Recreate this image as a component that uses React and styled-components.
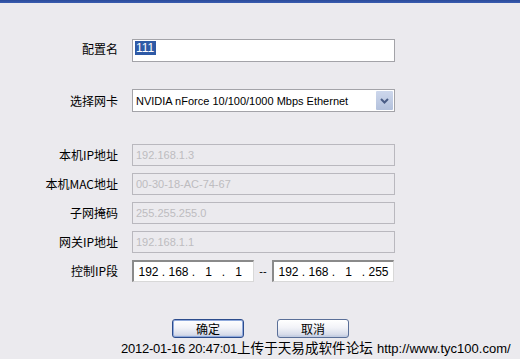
import React from "react";
import styled, { createGlobalStyle } from "styled-components";

const Global = createGlobalStyle`
  html, body { margin: 0; padding: 0; background: #ebeaee; }
  body { width: 520px; height: 359px; overflow: hidden; font-family: "Liberation Sans", "Noto Sans CJK SC", sans-serif; }
`;

const Page = styled.div`
  width: 520px;
  height: 359px;
  background: #ebeaee;
  display: flex;
  flex-direction: column;
`;

const TopBar = styled.div`
  height: 3px;
  background: linear-gradient(#2a4a9a, #3a5cb0);
  flex: none;
`;

const Form = styled.div`
  display: flex;
  flex-direction: column;
  padding-top: 36px;
`;

const Row = styled.div`
  display: grid;
  grid-template-columns: 118px 263px;
  column-gap: 14px;
  align-items: center;
  margin-top: ${(p) => p.$gap || 0}px;
  height: ${(p) => p.$h || 22}px;
`;

const Label = styled.div`
  text-align: right;
  font-family: "Noto Sans CJK SC", sans-serif;
  font-size: 12px;
  line-height: 14px;
  color: #000;
  margin-top: ${(p) => (p.$up ? -3 : 0)}px;
`;

const TextBox = styled.div`
  box-sizing: border-box;
  height: 100%;
  background: #fff;
  border: 1px solid #a3a3a8;
  display: flex;
  align-items: center;
  padding-left: 2px;
`;

const Selected = styled.span`
  background: #2f5aa6;
  color: #fff;
  font-family: "Liberation Sans", sans-serif;
  font-size: 12px;
  line-height: 14px;
  padding: 0 2px 0 1px;
  margin-top: -6px;
`;

const SelectBox = styled.div`
  box-sizing: border-box;
  height: 100%;
  background: #fff;
  border: 1px solid #a3a3a8;
  display: flex;
  align-items: stretch;
`;

const SelectText = styled.div`
  flex: 1;
  display: flex;
  align-items: center;
  padding-left: 3px;
  font-family: "Liberation Sans", sans-serif;
  font-size: 11px;
  color: #000;
`;

const ArrowBtn = styled.div`
  width: 17px;
  margin: 1px;
  background: linear-gradient(#cdd7ec, #b3c1dc);
  border-radius: 1px;
  display: flex;
  align-items: center;
  justify-content: center;
`;

const Disabled = styled.div`
  box-sizing: border-box;
  height: 100%;
  background: #ebeaee;
  border: 1px solid #b9b8be;
  display: flex;
  align-items: center;
  padding-left: 3px;
  font-family: "Liberation Sans", sans-serif;
  font-size: 11px;
  color: #bdbcc0;
`;

const IpRange = styled.div`
  display: flex;
  align-items: center;
  height: 100%;
`;

const IpBox = styled.div`
  box-sizing: border-box;
  width: 122px;
  height: 100%;
  background: #fff;
  border-top: 2px solid #8a8a8a;
  border-left: 2px solid #8a8a8a;
  border-right: 1px solid #d8d8d8;
  border-bottom: 1px solid #d8d8d8;
  display: flex;
  align-items: center;
  padding-left: 3px;
  font-family: "Liberation Sans", sans-serif;
  font-size: 12px;
  color: #000;
`;

const Octet = styled.span`
  width: 23px;
  text-align: center;
`;

const Dot = styled.span`
  width: 7px;
  text-align: center;
`;

const Dash = styled.span`
  width: 18px;
  text-align: center;
  font-family: "Liberation Sans", sans-serif;
  font-size: 11px;
  color: #000;
`;

const Buttons = styled.div`
  display: flex;
  gap: 33px;
  padding-left: 172px;
  margin-top: 37px;
`;

const Button = styled.button`
  box-sizing: border-box;
  width: 72px;
  height: 19px;
  padding: 0;
  border: 1px solid ${(p) => (p.$primary ? "#2c4c8c" : "#5a6f98")};
  border-radius: 3px;
  background: linear-gradient(#ffffff 0%, #f2f3f8 45%, #d7dcea 85%, #b8c3dc 100%);
  box-shadow: ${(p) => (p.$primary ? "inset 0 0 0 1px #8fa9dc" : "inset 0 -1px 0 #c3cde2")};
  font-family: "Noto Sans CJK SC", sans-serif;
  font-size: 12px;
  line-height: 16px;
  color: #000;
`;

const Caption = styled.div`
  margin-left: 121px;
  margin-top: 1px;
  display: flex;
  align-items: baseline;
  line-height: 16px;
  color: #000;
  white-space: nowrap;
`;

const CapDate = styled.span`
  font-family: "Liberation Sans", sans-serif;
  font-size: 13px;
  letter-spacing: -0.25px;
`;

const CapCjk = styled.span`
  font-family: "Noto Sans CJK SC", sans-serif;
  font-size: 13.6px;
`;

const CapUrl = styled.span`
  font-family: "Liberation Sans", sans-serif;
  font-size: 13px;
  margin-left: 4px;
`;

const Ip = ({ parts }) => (
  <IpBox>
    <Octet>{parts[0]}</Octet>
    <Dot>.</Dot>
    <Octet>{parts[1]}</Octet>
    <Dot>.</Dot>
    <Octet>{parts[2]}</Octet>
    <Dot>.</Dot>
    <Octet>{parts[3]}</Octet>
  </IpBox>
);

export default function App() {
  return (
    <Page>
      <Global />
      <TopBar />
      <Form>
        <Row $h={23}>
          <Label $up>配置名</Label>
          <TextBox>
            <Selected>111</Selected>
          </TextBox>
        </Row>
        <Row $h={23} $gap={27}>
          <Label>选择网卡</Label>
          <SelectBox>
            <SelectText>NVIDIA nForce 10/100/1000 Mbps Ethernet</SelectText>
            <ArrowBtn>
              <svg width="9" height="6" viewBox="0 0 9 6">
                <path d="M1 1 L4.5 4.5 L8 1" fill="none" stroke="#4a5d86" strokeWidth="2" />
              </svg>
            </ArrowBtn>
          </SelectBox>
        </Row>
        <Row $gap={32}>
          <Label>本机IP地址</Label>
          <Disabled>192.168.1.3</Disabled>
        </Row>
        <Row $gap={7}>
          <Label>本机MAC地址</Label>
          <Disabled>00-30-18-AC-74-67</Disabled>
        </Row>
        <Row $gap={7}>
          <Label>子网掩码</Label>
          <Disabled>255.255.255.0</Disabled>
        </Row>
        <Row $gap={7}>
          <Label>网关IP地址</Label>
          <Disabled>192.168.1.1</Disabled>
        </Row>
        <Row $gap={7}>
          <Label>控制IP段</Label>
          <IpRange>
            <Ip parts={["192", "168", "1", "1"]} />
            <Dash>--</Dash>
            <Ip parts={["192", "168", "1", "255"]} />
          </IpRange>
        </Row>
      </Form>
      <Buttons>
        <Button $primary>确定</Button>
        <Button>取消</Button>
      </Buttons>
      <Caption>
        <CapDate>2012-01-16 20:47:01</CapDate>
        <CapCjk>上传于天易成软件论坛</CapCjk>
        <CapUrl>http://www.tyc100.com/</CapUrl>
      </Caption>
    </Page>
  );
}
